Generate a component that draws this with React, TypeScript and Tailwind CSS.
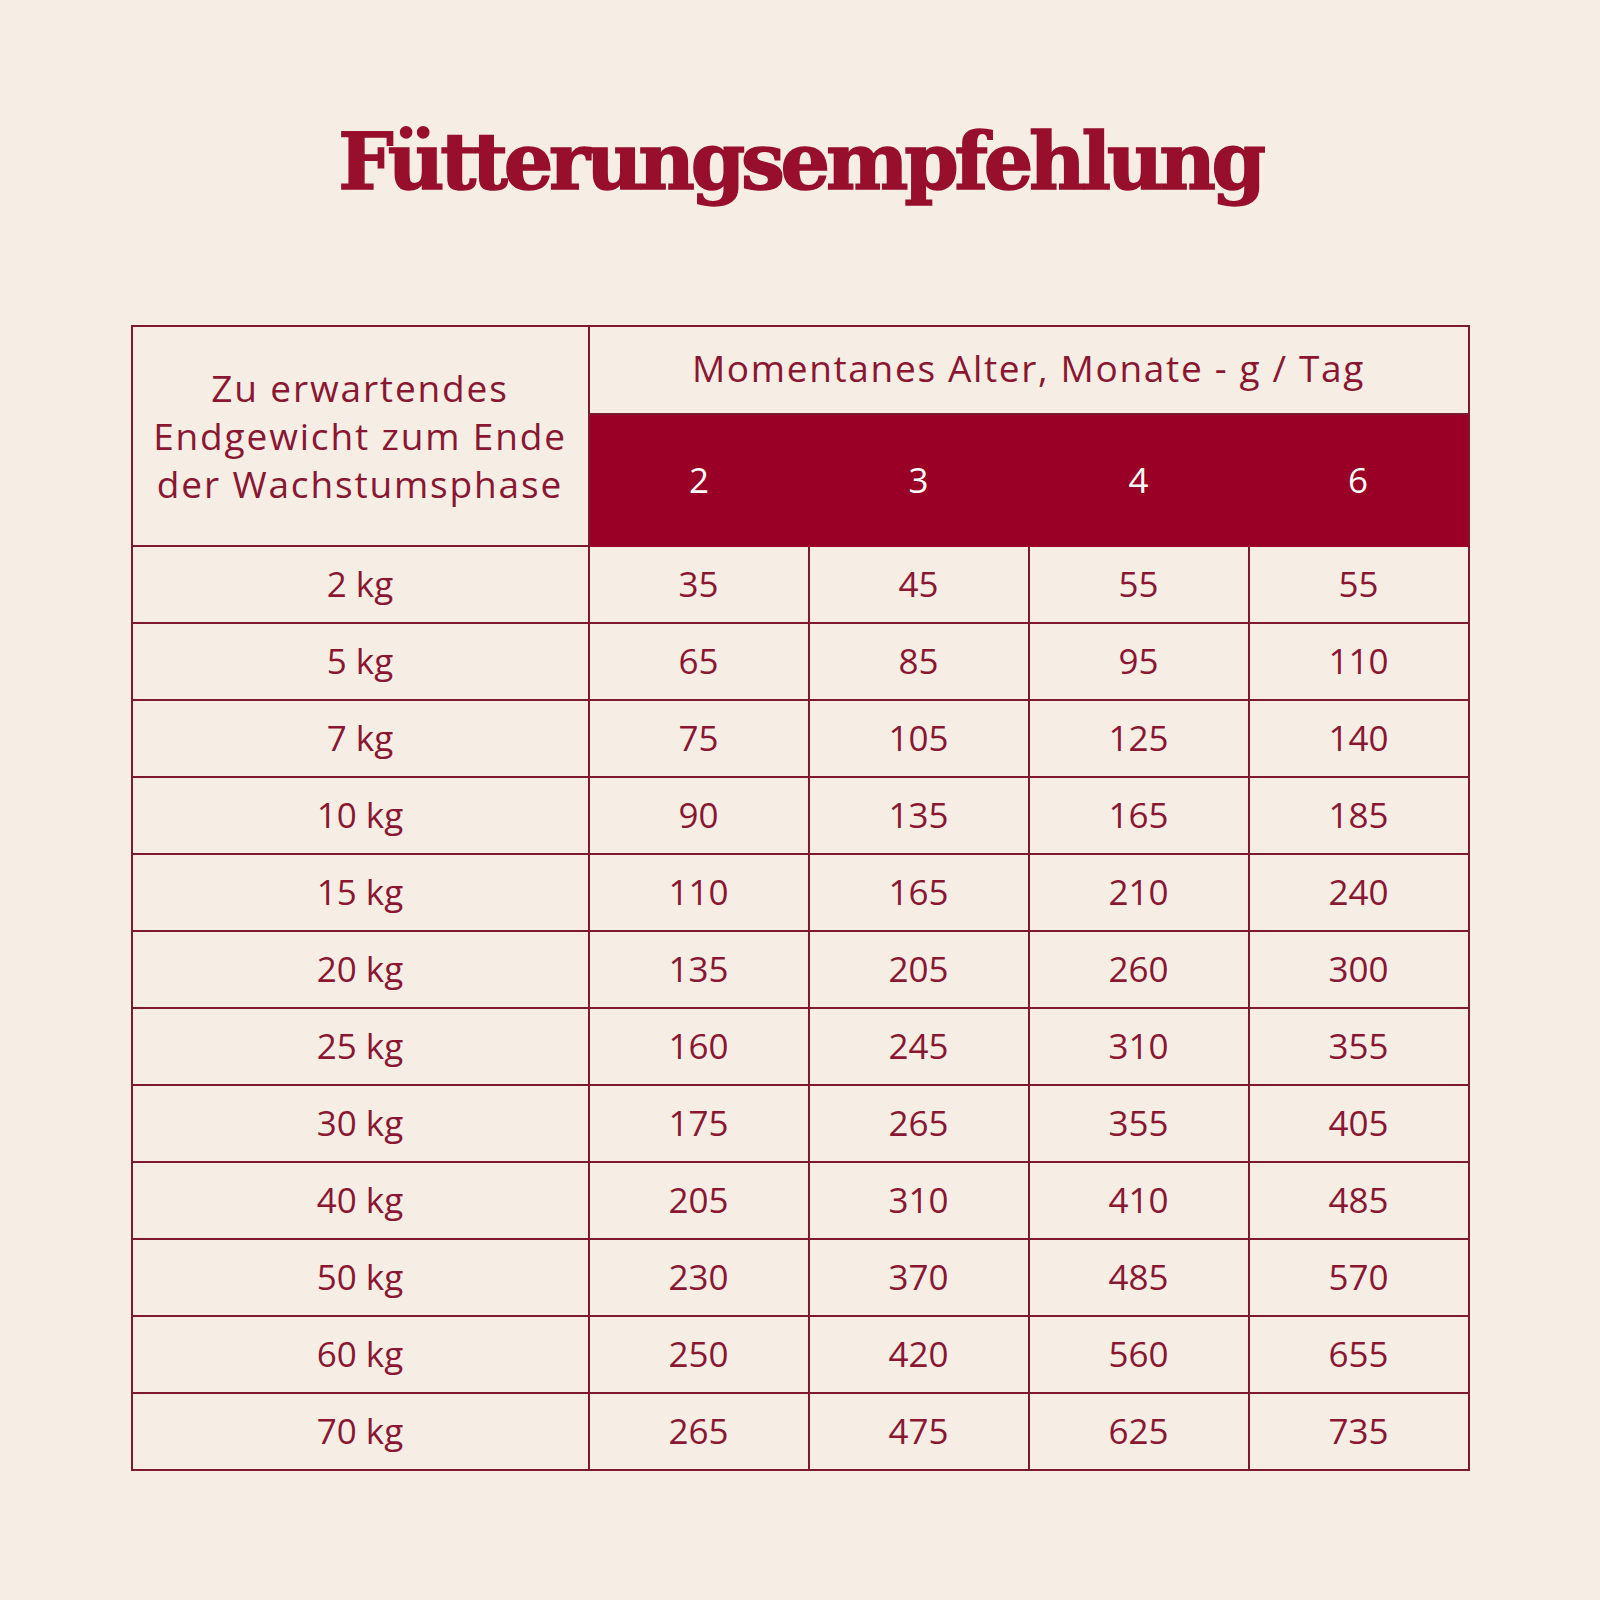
import React from 'react';

const ages = ['2', '3', '4', '6'];

const rows: { weight: string; values: number[] }[] = [
  { weight: '2 kg', values: [35, 45, 55, 55] },
  { weight: '5 kg', values: [65, 85, 95, 110] },
  { weight: '7 kg', values: [75, 105, 125, 140] },
  { weight: '10 kg', values: [90, 135, 165, 185] },
  { weight: '15 kg', values: [110, 165, 210, 240] },
  { weight: '20 kg', values: [135, 205, 260, 300] },
  { weight: '25 kg', values: [160, 245, 310, 355] },
  { weight: '30 kg', values: [175, 265, 355, 405] },
  { weight: '40 kg', values: [205, 310, 410, 485] },
  { weight: '50 kg', values: [230, 370, 485, 570] },
  { weight: '60 kg', values: [250, 420, 560, 655] },
  { weight: '70 kg', values: [265, 475, 625, 735] },
];

const App: React.FC = () => {
  return (
    <div className="w-[1600px] h-[1600px] bg-[#f6eee5] flex flex-col items-center" style={{ fontFamily: '"Open Sans", Lato, sans-serif' }}>
      <h1
        className="mt-[112px] h-[110px] text-[78px] leading-[100px] font-bold tracking-[-0.055em] text-[#970f2d] [-webkit-text-stroke:1.5px_#970f2d]"
        style={{ fontFamily: '"DejaVu Serif", serif' }}
      >
        Fütterungsempfehlung
      </h1>
      <table className="mt-[103px] border-collapse text-[#8a1632] text-[35px] table-fixed">
        <colgroup>
          <col className="w-[457px]" />
          <col className="w-[220px]" />
          <col className="w-[220px]" />
          <col className="w-[220px]" />
          <col className="w-[220px]" />
        </colgroup>
        <thead>
          <tr className="h-[88px]">
            <th rowSpan={2} className="border-2 border-[#7e1a2f] font-normal text-[37px] tracking-[0.05em] leading-[48px] text-center px-1">
              Zu erwartendes<br />Endgewicht zum Ende<br />der Wachstumsphase
            </th>
            <th colSpan={4} className="border-2 border-[#7e1a2f] font-normal text-[37px] tracking-[0.045em] text-center pb-1">
              Momentanes Alter, Monate - g / Tag
            </th>
          </tr>
          <tr className="h-[132px] bg-[#9a0025]">
            {ages.map((a) => (
              <th key={a} className="border-y-2 border-[#9a0025] last:border-r-2 last:border-r-[#7e1a2f] font-normal text-white text-center">
                {a}
              </th>
            ))}
          </tr>
        </thead>
        <tbody>
          {rows.map((r) => (
            <tr key={r.weight} className="h-[77px]">
              <td className="border-2 border-[#7e1a2f] text-center">{r.weight}</td>
              {r.values.map((v, i) => (
                <td key={i} className="border-2 border-[#7e1a2f] text-center">{v}</td>
              ))}
            </tr>
          ))}
        </tbody>
      </table>
    </div>
  );
};

export default App;
